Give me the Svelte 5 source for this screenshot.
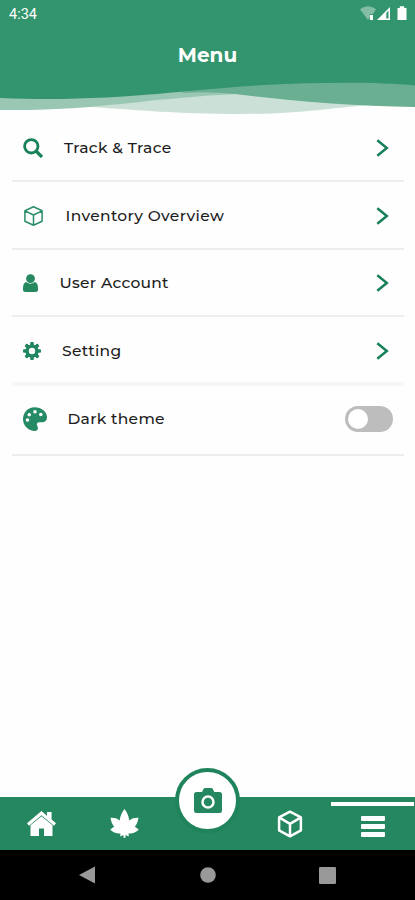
<script>
  const rows = [
    { icon: 'search', label: 'Track & Trace', width: 41, spacing: 0.34, height: 68 },
    { icon: 'cube', label: 'Inventory Overview', width: 42.5, spacing: 0.34, height: 68 },
    { icon: 'user', label: 'User Account', width: 36.5, spacing: 0.27, height: 67 },
    { icon: 'gear', label: 'Setting', width: 39, spacing: 0.3, height: 69, thick: true },
    { icon: 'palette', label: 'Dark theme', width: 44.5, spacing: 0.3, height: 70 }
  ];
  const teeth = [0, 45, 90, 135, 180, 225, 270, 315];
  let dark = $state(false);
</script>

<div class="screen">
  <header>
    <svg class="waves" width="415" height="115" viewBox="0 0 415 115">
      <path fill="#cbe1d7" d="M90 107C140 110 175 114 240 114C300 114 330 108 370 105L300 90L180 90Z" />
      <path fill="#9ac7b3" d="M0 90V110C80 111 120 103 180 98Q210 95 238 94V80Z" />
      <path fill="#6aaf92" d="M180 93Q208 91 235 94C290 101 350 106 415 107V75H260Z" />
      <path fill="#33956d" d="M0 0H415V85.5C380 82 320 82 265 85C190 89 110 103 0 98Z" />
    </svg>
    <div class="status">
      <span>4:34</span>
      <svg width="48" height="16" viewBox="0 0 48 16">
        <path d="M0 3.3Q8 -3 16 3.3L13 8H10V11L8 14Z" fill="#83bea4" />
        <path d="M10 9h3v5h-3Z" fill="#fff" />
        <path d="M17 14 30 1V14Z" fill="#fff" />
        <path d="M26.3 7 28.5 4.5V12.5H26.3Z" fill="#33956d" />
        <path d="M37.5 2h2.3V.3h4.4V2h2.3v12h-9Z" fill="#fff" />
      </svg>
    </div>
    <h1>Menu</h1>
  </header>

  <main>
    {#each rows as row}
      <div class="row" class:thick={row.thick} style:height={`${row.height}px`}>
        <span class="lead" style:width={`${row.width}px`}>
          {#if row.icon === 'search'}
            <svg width="20" height="20" viewBox="0 0 20 20" fill="none" stroke="#188158">
              <circle cx="8.3" cy="8.3" r="6.7" stroke-width="2.8" />
              <path d="m13 13 6 6" stroke-width="3.3" />
            </svg>
          {:else if row.icon === 'cube'}
            <svg width="21" height="20" viewBox="0 0 21 20" fill="none" stroke="#2b8d67" stroke-width="1.5" stroke-linejoin="round">
              <path d="m10.5.8 8.6 4v10.4l-8.6 4-8.6-4V4.8ZM1.9 4.8l8.6 4.2 8.6-4.2M10.5 9v10.2" />
            </svg>
          {:else if row.icon === 'user'}
            <svg width="15" height="18" viewBox="0 0 15 18" fill="#25885f">
              <circle cx="7.5" cy="4.6" r="4.4" />
              <path d="M3.2 8Q7.5 11.5 11.8 8Q15 9 15 14v1.5q0 2.5-2.5 2.5h-10Q0 18 0 15.5V14Q0 9 3.2 8Z" />
            </svg>
          {:else if row.icon === 'gear'}
            <svg width="18" height="18" viewBox="0 0 18 18">
              <circle cx="9" cy="9" r="4.9" fill="none" stroke="#20865e" stroke-width="3.4" />
              {#each teeth as angle}
                <rect x="7.2" y="0" width="3.6" height="4" rx="1" fill="#20865e" transform={`rotate(${angle} 9 9)`} />
              {/each}
            </svg>
          {:else}
            <svg width="24" height="24" viewBox="0 0 24 24">
              <path fill="#258b64" d="M11.5.2C18.5.2 24 4.7 24 10.5c0 3.2-2.2 4.7-5 4.7h-2.6c-2.4 0-3.2 2-2.1 3.8 1.3 2.1.6 5-2.3 5C5.4 24 0 18.7 0 12.3 0 5.5 5 .2 11.5.2Z" />
              <g fill="#fff"><circle cx="4.5" cy="13" r="1.8" /><circle cx="6.3" cy="7.8" r="1.8" /><circle cx="12" cy="4.7" r="1.8" /><circle cx="17.8" cy="7.5" r="1.8" /></g>
            </svg>
          {/if}
        </span>
        <span class="label" style:letter-spacing={`${row.spacing}px`}>{row.label}</span>
        {#if row.icon === 'palette'}
          <button class="toggle" class:on={dark} aria-label="Dark theme" onclick={() => (dark = !dark)}><i></i></button>
        {:else}
          <svg class="chevron" width="13" height="18" viewBox="0 0 13 18"><path d="m1.3 1.2 9.5 7.8-9.5 7.8" fill="none" stroke="#188058" stroke-width="2.5" /></svg>
        {/if}
      </div>
    {/each}
  </main>

  <nav>
    <div class="tab">
      <svg width="29" height="26" viewBox="0 0 29 26" fill="#fff">
        <path d="M14.5 0 20 4.7V1h4.6v7.6L29 12.3 27 14.7 14.5 4.3 2 14.7 0 12.3Z" />
        <path d="M14.5 5.3 25.5 14.3V25H17v-7.5h-5V25H3.5V14.3Z" />
      </svg>
    </div>
    <div class="tab">
      <svg width="29" height="29" viewBox="0 0 29 29" fill="#fff">
        <path d="M14.5 0C17 3 18.8 7 19.3 11.5 22 9.2 25 8.6 28.5 8.8 28 12.4 26.8 15.2 24.8 17.8 26.2 18.4 27.5 19.4 28.7 20.8 26 23.3 22 25 18.6 24.4L18.8 27.4 15.5 26V28.7H13.5V26L10.2 27.4 10.4 24.4C7 25 3 23.3.3 20.8 1.5 19.4 2.8 18.4 4.2 17.8 2.2 15.2 1 12.4.5 8.8 4 8.6 7 9.2 9.7 11.5 10.2 7 12 3 14.5 0Z" />
      </svg>
    </div>
    <div class="tab">
      <div class="camera">
        <svg width="28" height="25" viewBox="0 0 28 25">
          <path fill="#25875f" d="M2.5 4H8L9.5 1Q10 0 11.2 0h6Q18.2 0 18.8 1L20.3 4h5.2Q28 4 28 6.5v15.7Q28 25 25.2 25H2.8Q0 25 0 22.2V6.5Q0 4 2.5 4Z" />
          <circle cx="14" cy="14" r="5.5" fill="none" stroke="#fff" stroke-width="2.5" />
        </svg>
      </div>
    </div>
    <div class="tab cube">
      <svg width="26" height="28" viewBox="0 0 26 28" fill="none" stroke="#fff" stroke-width="2.5" stroke-linejoin="round">
        <path d="m13 1.7 10.9 5.7v13L13 26.3 2.1 20.4v-13ZM2.1 7.4 13 13.8l10.9-6.4M13 13.8v12.5" />
      </svg>
    </div>
    <div class="tab active">
      <div class="bars"><i></i><i></i><i></i></div>
    </div>
  </nav>

  <footer>
    <svg width="17" height="18" viewBox="0 0 17 18"><path d="M0 9 16 .5v17Z" fill="#999" /></svg>
    <svg width="16" height="16" viewBox="0 0 16 16"><circle cx="8" cy="8" r="7.8" fill="#999" /></svg>
    <svg width="17" height="17" viewBox="0 0 17 17"><rect width="17" height="17" rx="1.2" fill="#999" /></svg>
  </footer>
</div>

<style>
  :global(body) { margin: 0; background: #fff; }
  .screen {
    width: 415px;
    height: 900px;
    display: flex;
    flex-direction: column;
    overflow: hidden;
    background: #fefefe;
    font-family: Montserrat, Inter, sans-serif;
  }
  header { position: relative; height: 114px; flex: none; color: #fff; }
  .waves { position: absolute; left: 0; top: 0; }
  .status {
    position: relative;
    display: flex;
    justify-content: space-between;
    padding: 6px 7px 0 9px;
    height: 22px;
    font: 14.5px/17px Roboto, sans-serif;
  }
  h1 {
    position: relative;
    margin: 14px 0 0;
    text-align: center;
    font-size: 20px;
    font-weight: 700;
    line-height: 26px;
  }
  main { flex: 1; padding: 0 11px 0 12px; }
  .row {
    display: flex;
    align-items: center;
    box-sizing: border-box;
    padding: 2px 15px 0 11px;
    border-bottom: 2px solid #eee;
  }
  .row:nth-child(3) { padding-top: 0; }
  .row.thick { border-bottom: 4px solid #f6f6f6; }
  .row:last-child { padding-right: 11px; padding-bottom: 4px; }
  .lead { display: flex; flex: none; }
  .label { flex: 1; font-size: 15.5px; line-height: 20px; font-weight: 500; color: #1c1c1c; white-space: nowrap; }
  .toggle {
    display: flex;
    width: 48px;
    height: 26px;
    padding: 3px;
    border: 0;
    border-radius: 13px;
    background: #bdbdbd;
  }
  .toggle.on { justify-content: flex-end; background: #25885f; }
  .toggle i { width: 20px; height: 20px; border-radius: 50%; background: #fff; }
  nav { display: flex; flex: none; height: 53px; background: #25875f; }
  .tab { display: flex; flex: 1; justify-content: center; align-items: center; }
  .camera {
    display: flex;
    flex: none;
    justify-content: center;
    align-items: center;
    box-sizing: border-box;
    width: 65px;
    height: 65px;
    margin-top: -47px;
    border: 4px solid #1f835b;
    border-radius: 50%;
    background: #fff;
  }
  .cube { margin: 0 1px 0 -1px; }
  .active {
    flex-direction: column;
    justify-content: flex-start;
    border-top: 4px solid #fff;
    height: 44px;
    margin: 5px 1px 0 -1px;
  }
  .bars { display: flex; flex-direction: column; gap: 3px; margin-top: 10px; }
  .bars i { width: 24px; height: 5px; border-radius: 1px; background: #fff; }
  footer {
    display: flex;
    flex: none;
    justify-content: space-between;
    align-items: center;
    box-sizing: border-box;
    height: 50px;
    padding: 0 79px;
    background: #000;
  }
</style>
